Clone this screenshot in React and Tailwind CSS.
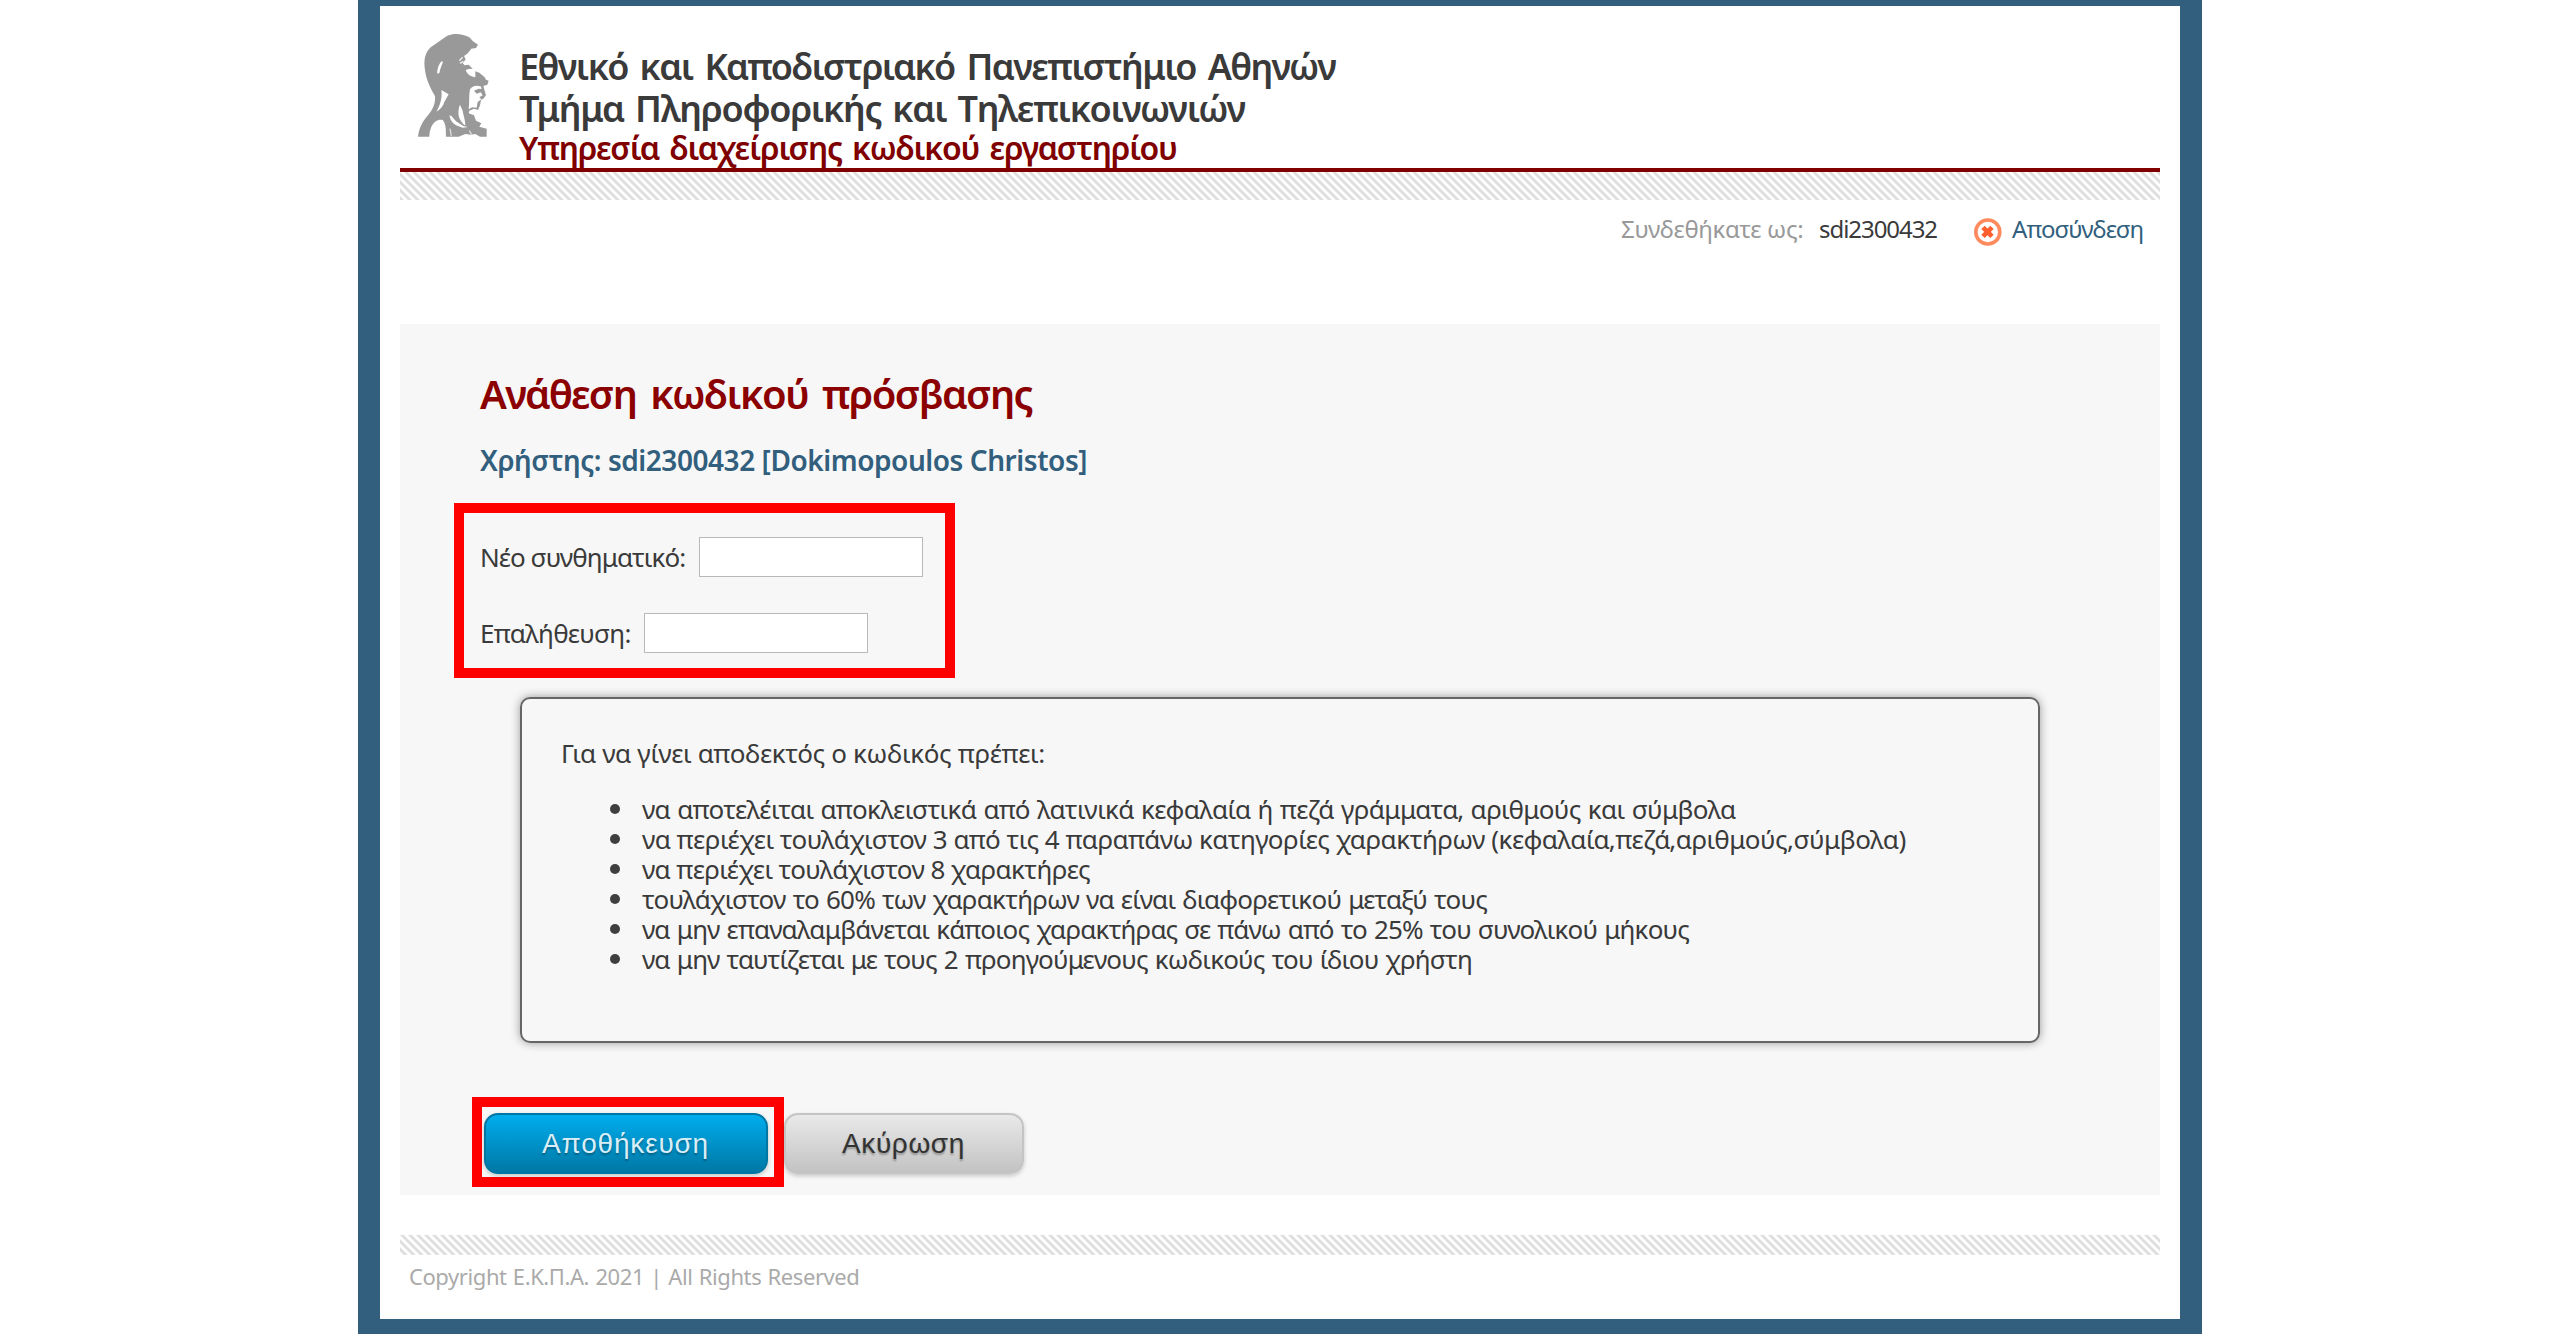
const rules = [
  ["να αποτελέιται αποκλειστικά από λατινικά κεφαλαία ή πεζά γράμματα, αριθμούς και σύμβολα", "tracking-[-0.65px] [word-spacing:1px]"],
  ["να περιέχει τουλάχιστον 3 από τις 4 παραπάνω κατηγορίες χαρακτήρων (κεφαλαία,πεζά,αριθμούς,σύμβολα)", "tracking-[-0.5px]"],
  ["να περιέχει τουλάχιστον 8 χαρακτήρες", "tracking-[-0.6px]"],
  ["τουλάχιστον το 60% των χαρακτήρων να είναι διαφορετικού μεταξύ τους", "tracking-[-0.78px] [word-spacing:1px]"],
  ["να μην επαναλαμβάνεται κάποιος χαρακτήρας σε πάνω από το 25% του συνολικού μήκους", "tracking-[-0.81px] [word-spacing:1px]"],
  ["να μην ταυτίζεται με τους 2 προηγούμενους κωδικούς του ίδιου χρήστη", "tracking-[-0.81px] [word-spacing:1px]"],
];

const HATCH =
  "bg-[length:8px_8px] bg-[linear-gradient(45deg,#dedede_0%,#dedede_18%,#fff_30%,#fff_43%,#dedede_55%,#dedede_68%,#fff_80%,#fff_93%,#dedede_100%)]";

function AthenaLogo() {
  return (
    <svg viewBox="0 0 330 390" className="h-[130px] w-[110px]" aria-hidden="true">
      <path
        fill="#999"
        fillRule="evenodd"
        d="M54 350 C57 326 66 306 84 286 C97 270 107 252 105 228 C92 206 78 178 75 150 C70 118 76 98 92 82 C108 70 126 58 142 47 C164 38 190 42 208 52 L219 64 L234 74 L228 84 L214 86 L202 101 L192 108 L197 118 L188 130 L194 136 L206 134 L218 146 L206 147 L197 150 C202 164 214 170 226 172 L226 154 L238 158 L254 172 L258 179 L266 182 L262 194 L250 198 L254 212 L258 226 L250 236 L243 240 L240 256 L234 270 L222 266 L208 272 L206 280 L222 286 L228 302 L244 310 L238 320 L260 326 L260 350 L240 350 L226 342 L214 344 L196 342 L176 350 L138 350 C138 330 138 312 128 300 C116 296 102 304 94 320 C90 330 88 340 88 350 Z
        M125 124 C117 132 111 146 112 161 L118 159 C120 146 126 134 129 125 Z
        M124 210 C127 228 123 252 109 275 C122 267 129 259 133 246 C139 236 143 229 146 223 L134 216 Z
        M210 208 C206 226 209 246 206 268 L216 262 L230 263 L233 246 L244 238 L238 232 L248 226 L242 217 L230 221 L222 212 L236 206 L245 207 L242 199 L230 197 C221 197 215 201 210 208 Z
        M180 254 C174 268 173 286 181 300 C187 309 190 314 196 316 C196 300 190 286 188 272 Z
        M148 286 C152 302 158 312 172 317 L188 323 L204 321 L190 318 L168 304 L155 289 Z"
      />
      <path d="M178 122 L188 112 M180 130 L190 124" stroke="#eee" strokeWidth="4" />
      <path d="M150 326 l4 22 M208 332 l8 13" stroke="#ddd" strokeWidth="4" />
    </svg>
  );
}

function LogoutIcon() {
  return (
    <svg viewBox="0 0 28 28" className="h-7 w-7" aria-hidden="true">
      <circle cx="13.8" cy="14" r="12" fill="#fff" stroke="#ff8a5e" strokeWidth="3.6" />
      <path d="M9 9.4 L18 18.4 M18 9.4 L9 18.4" stroke="#ff5f2e" strokeWidth="4.8" />
    </svg>
  );
}

export default function App() {
  return (
    <div className="flex h-[1334px] w-[2560px] justify-center overflow-hidden bg-white font-['Noto_Sans','Open_Sans',sans-serif] text-[#3a3a3a]">
      <div className="flex w-[1844px] flex-col bg-[#315f7d] px-[22px] pt-1.5 pb-[15px]">
        <div className="flex grow flex-col bg-white px-5">
          <header className="flex h-[166px] shrink-0 border-b-4 border-[#800000]">
            <div className="mt-3.5 w-[119px] shrink-0">
              <AthenaLogo />
            </div>
            <div className="pt-10 font-semibold whitespace-nowrap">
              <h1 className="text-[36px] leading-[42px] tracking-[-1.6px] [word-spacing:4px]">Εθνικό και Καποδιστριακό Πανεπιστήμιο Αθηνών</h1>
              <h1 className="text-[36px] leading-[42px] tracking-[-1.27px] [word-spacing:3px]">Τμήμα Πληροφορικής και Τηλεπικοινωνιών</h1>
              <h2 className="text-[32px] leading-[36px] tracking-[-1.16px] [word-spacing:3px] text-[#800000]">Υπηρεσία διαχείρισης κωδικού εργαστηρίου</h2>
            </div>
          </header>
          <div className={`h-7 shrink-0 bg-[position:0_-4px] ${HATCH}`} />

          <div className="flex h-[124px] shrink-0 items-start justify-end pt-[13px] pr-4 text-[24px] leading-8 whitespace-nowrap">
            <span className="w-[198px] tracking-[-0.35px] text-[#999]">Συνδεθήκατε ως:</span>
            <span className="w-[155px] tracking-[-1.05px]">sdi2300432</span>
            <a className="flex items-start text-[#315f7d]">
              <span className="mt-[5px] mr-[10px]">
                <LogoutIcon />
              </span>
              <span className="w-[132px] tracking-[-0.93px]">Αποσύνδεση</span>
            </a>
          </div>

          <main className="h-[871px] shrink-0 bg-[#f7f7f7] px-20 pt-[46px] whitespace-nowrap">
            <h2 className="text-[40px] leading-[48px] font-semibold tracking-[-1.6px] [word-spacing:5px] text-[#8b0000]">Ανάθεση κωδικού πρόσβασης</h2>
            <h3 className="mt-6 text-[28px] leading-9 font-semibold tracking-[-0.45px] text-[#315f7d]">
              Χρήστης: sdi2300432 [Dokimopoulos Christos]
            </h3>

            <div className="mt-[25px] -ml-[26px] flex h-[175px] w-[501px] flex-col gap-9 border-10 border-[#ff0000] pt-6 pl-4 text-[26px] leading-10">
              <label className="flex h-10">
                <span className="w-[219px] tracking-[-0.9px]">Νέο συνθηματικό:</span>
                <input type="password" className="h-10 w-[224px] border border-[#b9b9b9] bg-white" />
              </label>
              <label className="flex h-10">
                <span className="w-[164px] tracking-[-0.7px]">Επαλήθευση:</span>
                <input type="password" className="h-10 w-[224px] border border-[#b9b9b9] bg-white" />
              </label>
            </div>

            <section className="mt-[19px] ml-10 h-[346px] w-[1520px] rounded-[10px] border-2 border-[#666] pt-[39px] pl-[39px] text-[26px] leading-[30px] shadow-[0_0_10px_#999]">
              <p className="tracking-[-0.36px]">Για να γίνει αποδεκτός ο κωδικός πρέπει:</p>
              <ul className="mt-[26px] pl-[49px]">
                {rules.map(([text, tracking]) => (
                  <li key={text} className="flex items-center">
                    <span className="mr-[22px] size-[10px] rounded-full bg-[#3f3f3f]" />
                    <span className={tracking}>{text}</span>
                  </li>
                ))}
              </ul>
            </section>

            <div className="mt-[54px] -ml-2 flex items-start font-['Liberation_Sans',Arial,sans-serif] text-[28px]">
              <div className="h-[90px] w-[312px] border-10 border-[#ff0000] pt-1.5 pl-0.5">
                <button className="block h-[61px] w-[284px] rounded-[14px] border-2 border-[#0076a3] bg-linear-to-b from-[#00adee] to-[#0078a5] pr-px tracking-[0.8px] text-[#d9eef7] shadow-[0_2px_4px_rgba(0,0,0,0.2)] [text-shadow:0_2px_2px_rgba(0,0,0,0.3)]">
                  Αποθήκευση
                </button>
              </div>
              <button className="mt-4 block h-[61px] w-60 rounded-[14px] border-2 border-[#c4c4c4] bg-linear-to-b from-[#e9e9e9] to-[#c3c3c3] pr-px tracking-[0.6px] text-[#333] shadow-[0_2px_4px_rgba(0,0,0,0.2)] [text-shadow:0_2px_2px_rgba(0,0,0,0.3)]">
                Ακύρωση
              </button>
            </div>
          </main>

          <footer className="mt-10">
            <div className={`h-5 ${HATCH}`} />
            <p className="mt-1.5 ml-[9px] text-[22px] leading-[30px] tracking-[-0.42px] [word-spacing:1px] text-[#aaa]">
              Copyright Ε.Κ.Π.Α. 2021 | All Rights Reserved
            </p>
          </footer>
        </div>
      </div>
    </div>
  );
}
